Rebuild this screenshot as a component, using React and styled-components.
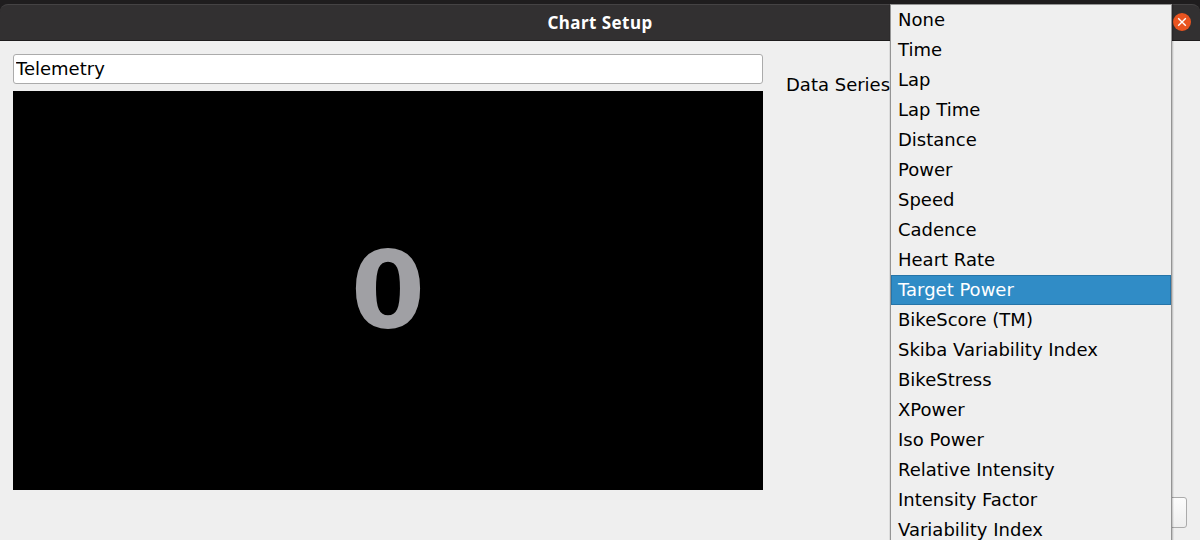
import React from 'react';
import styled, { createGlobalStyle } from 'styled-components';

const GlobalStyle = createGlobalStyle`
  * { box-sizing: border-box; }
  html, body { margin: 0; height: 100%; overflow: hidden; background: #1f1d1e; }
`;

const Screen = styled.div`
  position: relative;
  display: flex;
  flex-direction: column;
  width: 1200px;
  height: 540px;
  padding-top: 4px;
  overflow: hidden;
  background: #1f1d1e;
  color: #000;
  font: 18px/30px "DejaVu Sans", sans-serif;
`;

const TitleBar = styled.header`
  display: flex;
  flex: none;
  align-items: center;
  justify-content: center;
  position: relative;
  height: 37px;
  border-top: 1px solid #454344;
  border-bottom: 1px solid #1d1b1c;
  border-radius: 8px 8px 0 0;
  background: #323031;
`;

const Title = styled.h1`
  margin: 0;
  color: #fff;
  font: bold 17px/34px "Noto Sans", sans-serif;
  letter-spacing: 0.45px;
`;

const CloseButton = styled.button`
  position: absolute;
  top: 8px;
  right: 9px;
  width: 18px;
  height: 18px;
  padding: 0;
  border: 0;
  border-radius: 50%;
  background: #e95420;

  svg { display: block; }
`;

const Body = styled.main`
  display: flex;
  flex: 1;
  gap: 23px;
  padding: 13px 13px 12px;
  background: #efefef;
`;

const Preview = styled.section`
  display: flex;
  flex-direction: column;
  gap: 7px;
  width: 750px;
`;

const NameInput = styled.input`
  width: 100%;
  height: 30px;
  padding: 0 2px 1px;
  border: 1px solid #ababab;
  border-radius: 3px;
  outline: 0;
  background: #fff;
  color: #000;
  font: inherit;
`;

const Dial = styled.div`
  display: flex;
  align-items: center;
  justify-content: center;
  height: 399px;
  background: #000;
  color: #a0a0a4;
  font-size: 107px;
  font-weight: bold;
  line-height: 1;
`;

const Settings = styled.section`
  display: flex;
  flex: 1;
  flex-direction: column;
  justify-content: space-between;
`;

const Label = styled.label`
  padding-top: 16px;
`;

const OkButton = styled.button`
  align-self: flex-end;
  width: 100px;
  height: 31px;
  border: 1px solid #ababab;
  border-radius: 3px;
  background: linear-gradient(#fcfcfc, #eeeeee);
`;

const Menu = styled.ul`
  position: absolute;
  top: 4px;
  left: 890px;
  width: 282px;
  height: 560px;
  margin: 0;
  padding: 0;
  border: 1px solid #949494;
  background: #efefef;
  box-shadow: 1px 0 0 rgba(0, 0, 0, 0.12), 2px 0 0 rgba(0, 0, 0, 0.05), -1px 0 0 rgba(0, 0, 0, 0.08);
  list-style: none;
`;

const MenuItem = styled.li`
  height: 30px;
  padding-left: 6px;
  border: 1px solid ${(p) => (p.$selected ? '#2574a8' : 'transparent')};
  background: ${(p) => (p.$selected ? '#308cc6' : 'transparent')};
  color: ${(p) => (p.$selected ? '#fff' : '#000')};
  line-height: 28px;
  white-space: nowrap;
`;

const series = [
  'None', 'Time', 'Lap', 'Lap Time', 'Distance', 'Power', 'Speed', 'Cadence',
  'Heart Rate', 'Target Power', 'BikeScore (TM)', 'Skiba Variability Index',
  'BikeStress', 'XPower', 'Iso Power', 'Relative Intensity',
  'Intensity Factor', 'Variability Index',
];

export default function App() {
  return (
    <Screen>
      <GlobalStyle />
      <TitleBar>
        <Title>Chart Setup</Title>
        <CloseButton aria-label="Close">
          <svg width="18" height="18" viewBox="0 0 18 18" fill="none" stroke="#fff" strokeWidth="1.4">
            <path d="M5.2 5.2 12.8 12.8M12.8 5.2 5.2 12.8" />
          </svg>
        </CloseButton>
      </TitleBar>
      <Body>
        <Preview>
          <NameInput defaultValue="Telemetry" />
          <Dial>0</Dial>
        </Preview>
        <Settings>
          <Label>Data Series</Label>
          <OkButton aria-label="OK" />
        </Settings>
      </Body>
      <Menu>
        {series.map((name) => (
          <MenuItem key={name} $selected={name === 'Target Power'}>{name}</MenuItem>
        ))}
      </Menu>
    </Screen>
  );
}
